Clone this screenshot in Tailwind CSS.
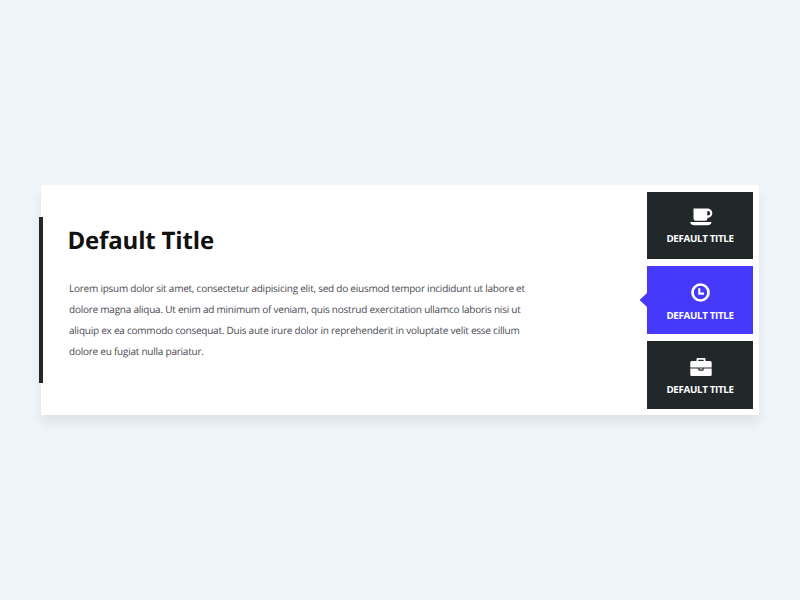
<!DOCTYPE html>
<html lang="en"><head><meta charset="utf-8"><title>Tabs</title>
<script src="https://cdn.jsdelivr.net/npm/@tailwindcss/browser@4"></script></head>
<body class="bg-[#eff5f8] font-['Open_Sans',sans-serif] [text-rendering:geometricPrecision]">
<main class="flex h-[600px] w-[800px] items-center justify-center">
<section class="relative flex h-[230px] w-[718px] bg-white shadow-[0_8px_12px_rgba(0,0,0,0.08)]">
<span class="absolute -left-0.5 top-8 h-[166px] w-1 bg-[#22282a]"></span>
<article class="flex-1 pl-[26.5px] pt-[39px]">
<h1 class="text-2xl leading-[33px] font-bold tracking-[-0.17px] text-[#111]">Default Title</h1>
<p class="mt-[21px] ml-[1.5px] text-[10px] leading-[21px] tracking-[-0.236px] whitespace-nowrap text-[#4b4b54]">Lorem ipsum dolor sit amet, consectetur adipisicing elit, sed do eiusmod tempor incididunt ut labore et<br>dolore magna aliqua. Ut enim ad minimum of veniam, quis nostrud exercitation ullamco laboris nisi ut<br>aliquip ex ea commodo consequat. Duis aute irure dolor in reprehenderit in voluptate velit esse cillum<br>dolore eu fugiat nulla pariatur.</p>
</article>
<nav class="mr-[6.5px] flex w-[106px] flex-col gap-[7px] pt-[6.5px] text-[9.8px] leading-3 font-bold tracking-[-0.34px] text-white">
<a class="flex h-[67.5px] flex-col items-center bg-[#22282a] pt-[15px]">
<svg class="ml-[3px] h-[20px] w-[24px]" viewBox="0 0 24 20" fill="currentColor"><path fill-rule="evenodd" d="M4.5 1.6H18.5C21.2 1.6 23.3 3.8 23.3 6.3S21.2 10.8 18.5 10.8V11.2C18.5 12.8 17.4 13.8 15.8 13.8H7.2C5.6 13.8 4.5 12.8 4.5 11.2ZM18.3 4V8.6H18.8C20.2 8.6 21.2 7.6 21.2 6.3S20.2 4 18.8 4Z"/><path d="M1.2 14.9H22.5C22.3 17.2 20.5 18.2 18.7 18.2H5C3.2 18.2 1.4 17.2 1.2 14.9Z"/></svg>
<span class="ml-px mt-[6px]">DEFAULT TITLE</span></a>
<a class="relative flex h-[68px] flex-col items-center bg-[#4639fb] pt-4">
<span class="absolute top-[27px] -left-[7px] h-[14px] w-[7.5px] bg-[#4639fb] [clip-path:polygon(100%_0,0_50%,100%_100%)]"></span>
<svg class="ml-px h-[21px] w-[21px]" viewBox="0 0 21 21" fill="none" stroke="currentColor"><circle cx="10.5" cy="10.5" r="8" stroke-width="2.7"/><path d="M9.3 6.2V11.7H14" stroke-width="2.2"/></svg>
<span class="ml-px mt-[6.5px]">DEFAULT TITLE</span></a>
<a class="flex h-[68px] flex-col items-center bg-[#22282a] pt-[15px]">
<svg class="ml-[2px] h-[22px] w-[22px]" viewBox="0 0 22 22" fill="currentColor"><path fill-rule="evenodd" d="M6.5 5V3.4C6.5 2.6 7 2.1 7.8 2.1H14.2C15 2.1 15.5 2.6 15.5 3.4V5H20C21 5 21.7 5.7 21.7 6.6V11.4H.3V6.6C.3 5.7 1 5 2 5ZM8.3 5H13.7V3.8H8.3Z"/><path d="M.3 12.4H8.3V13.8C8.3 14.4 8.6 14.7 9.2 14.7H12.8C13.4 14.7 13.7 14.4 13.7 13.8V12.4H21.7V18.4C21.7 19.3 21 20 20 20H2C1 20 .3 19.3 .3 18.4ZM9.4 12.4H12.6V13.6H9.4Z"/></svg>
<span class="ml-px mt-1.5">DEFAULT TITLE</span></a>
</nav>
</section></main></body></html>
